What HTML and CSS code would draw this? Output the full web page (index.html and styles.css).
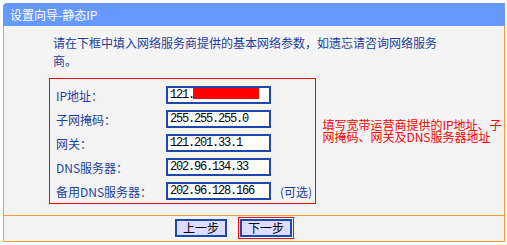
FILE: index.html
```html
<!DOCTYPE html>
<html lang="zh-CN">
  <head>
    <meta charset="UTF-8" />
    <meta name="viewport" content="width=device-width, initial-scale=1.0" />
    <title>设置向导-静态IP</title>
    <link rel="stylesheet" href="styles.css">
  </head>
  <body>
    <div class="wizard">
      <div class="wizard-head">设置向导-静态IP</div>
      <div class="wizard-body">
        <p class="intro">请在下框中填入网络服务商提供的基本网络参数，如遗忘请咨询网络服务商。</p>
        <div class="params">
          <div class="param-box">
            <div class="row">
              <span class="label">IP地址：</span>
              <div class="field">121.<span class="masked"></span></div>
            </div>
            <div class="row">
              <span class="label">子网掩码：</span>
              <div class="field">255.255.255.0</div>
            </div>
            <div class="row">
              <span class="label">网关：</span>
              <div class="field">121.201.33.1</div>
            </div>
            <div class="row">
              <span class="label">DNS服务器：</span>
              <div class="field">202.96.134.33</div>
            </div>
            <div class="row">
              <span class="label">备用DNS服务器：</span>
              <div class="field">202.96.128.166</div>
              <span class="optional">(可选)</span>
            </div>
          </div>
          <!-- 提示说明 -->
          <div class="hint">填写宽带运营商提供的IP地址、子网掩码、网关及DNS服务器地址</div>
        </div>
      </div>
      <div class="wizard-foot">
        <button type="button" class="btn">上一步</button>
        <button type="button" class="btn btn-next">下一步</button>
      </div>
    </div>
  </body>
</html>
```

FILE: styles.css
```css
* {
  margin: 0;
  padding: 0;
  box-sizing: border-box;
}

body {
  font-family: "Noto Sans CJK SC", "Liberation Sans", sans-serif;
  font-size: 12px;
  background-color: #fff;
}

.wizard {
  width: 502px;
  margin: 3px 0 0 3px;
}

.wizard-head {
  height: 23px;
  line-height: 23px;
  padding-left: 7px;
  background-color: #6699ff;
  color: #fff;
  border-radius: 4px 0 0 0;
}

.wizard-body {
  height: 190px;
  background-color: #f4f4f4;
  border-left: 1px solid #ff9933;
  border-right: 1px solid #ff9933;
  border-bottom: 1px solid #ff9933;
  padding: 8px 0 0 49px;
}

.intro {
  width: 390px;
  line-height: 18px;
  color: #1c3f9e;
}

.params {
  display: flex;
  margin-top: 8px;
  margin-left: -4px;
}

.param-box {
  width: 268px;
  border: 1px solid #ff0000;
  padding: 4px 0 0 6px;
}

.row {
  display: flex;
  align-items: center;
  height: 24px;
}

.label {
  width: 110px;
  color: #1c3f9e;
}

.field {
  width: 105px;
  height: 18px;
  border: 2px solid #1d48b0;
  background-color: #fff;
  padding-left: 2px;
  font-family: "Liberation Mono", monospace;
  font-size: 12px;
  letter-spacing: -1.2px;
  line-height: 14px;
  color: #000;
  white-space: nowrap;
  overflow: hidden;
}

.masked {
  display: inline-block;
  width: 66px;
  height: 11px;
  margin-left: -1px;
  vertical-align: -1px;
  background-color: #ff0000;
}

.optional {
  margin-left: 9px;
  color: #1c3f9e;
}

.hint {
  width: 182px;
  margin: 41px 0 0 6px;
  line-height: 12px;
  color: #ff0000;
}

.wizard-foot {
  display: flex;
  gap: 13px;
  height: 26px;
  padding: 3px 0 0 171px;
  background-color: #f4f4f4;
  border-left: 1px solid #ff9933;
  border-right: 1px solid #ff9933;
  border-bottom: 1px solid #ff9933;
}

.btn {
  width: 52px;
  height: 18px;
  background-color: #dcdcff;
  border: 2px solid #1d48b0;
  font-family: "Noto Sans CJK SC", sans-serif;
  font-size: 12px;
  line-height: 14px;
  color: #000;
  cursor: pointer;
}

.btn-next {
  outline: 1px solid #ff0000;
  outline-offset: 1px;
}
```
